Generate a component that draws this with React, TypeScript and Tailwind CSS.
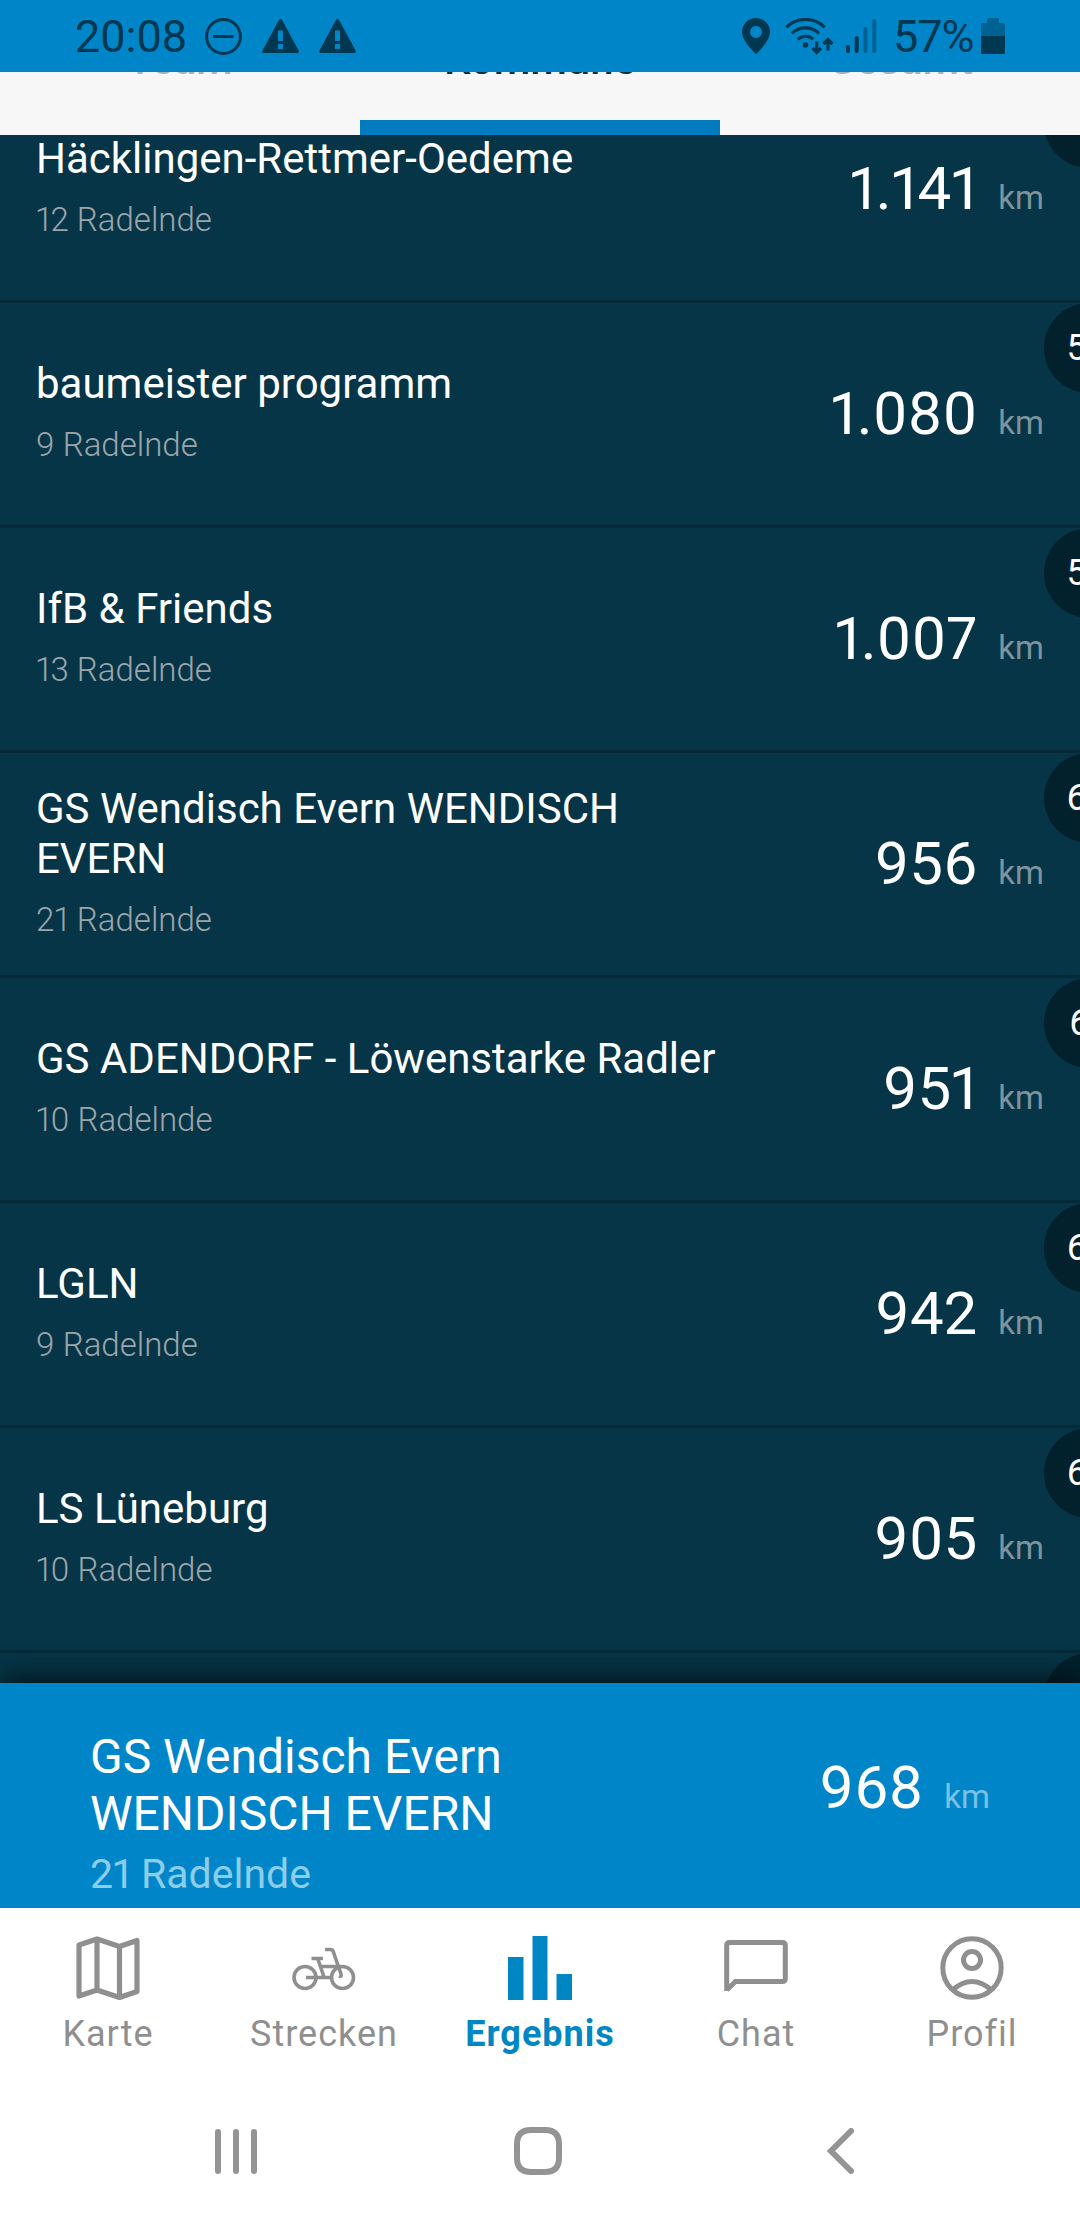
import React from 'react';

interface Team {
  rank: string;
  name: string;
  members: number;
  distance: string;
}

const teams: Team[] = [
  { rank: '57', name: 'Häcklingen-Rettmer-Oedeme', members: 12, distance: '1.141' },
  { rank: '58', name: 'baumeister programm', members: 9, distance: '1.080' },
  { rank: '59', name: 'IfB & Friends', members: 13, distance: '1.007' },
  { rank: '60', name: 'GS Wendisch Evern WENDISCH EVERN', members: 21, distance: '956' },
  { rank: '61', name: 'GS ADENDORF - Löwenstarke Radler', members: 10, distance: '951' },
  { rank: '62', name: 'LGLN', members: 9, distance: '942' },
  { rank: '63', name: 'LS Lüneburg', members: 10, distance: '905' },
];

const StatusBar: React.FC = () => (
  <header className="relative z-10 flex h-[72px] shrink-0 items-center justify-between bg-[#0086c8] pl-[75px] pr-[75px] text-[#003751]">
    <div className="flex items-center">
      <span className="w-[130px] pt-0.5 text-[45px] leading-[72px]">20:08</span>
      <svg width="37" height="37" viewBox="0 0 37 37" fill="none" stroke="currentColor" strokeWidth="3">
        <circle cx="18.5" cy="18.5" r="16.9" />
        <path d="M8 18.5h20.5" />
      </svg>
      <svg className="ml-5" width="37" height="34" viewBox="0 0 37 34" fill="currentColor">
        <path fillRule="evenodd" d="M17 .8Q18.500-.8 20 .8L36.800 32Q37 34 35.500 34H1.500Q0 34 .2 32ZM16 11.500v10.500h5V11.500ZM16 25v5h5v-5Z" />
      </svg>
      <svg className="ml-5" width="37" height="34" viewBox="0 0 37 34" fill="currentColor">
        <path fillRule="evenodd" d="M17 .8Q18.500-.8 20 .8L36.800 32Q37 34 35.500 34H1.500Q0 34 .2 32ZM16 11.500v10.500h5V11.500ZM16 25v5h5v-5Z" />
      </svg>
    </div>
    <div className="flex items-center">
      <svg width="28" height="36" viewBox="0 0 28 36" fill="currentColor">
        <path fillRule="evenodd" d="M14 0C6.300 0 0 6.200 0 14c0 9.800 14 22 14 22s14-12.200 14-22C28 6.200 21.700 0 14 0Zm0 8a6 6 0 1 1 0 12 6 6 0 0 1 0-12Z" />
      </svg>
      <svg className="ml-[15px]" width="49" height="37" viewBox="0 0 49 37" fill="none" stroke="currentColor" strokeWidth="3.200">
        <path d="M1.300 9.300a27.500 27.500 0 0 1 38.400 0M7 15.300a19.400 19.400 0 0 1 27 0M12.700 21.300a11.500 11.500 0 0 1 15.600 0" />
        <circle cx="20.500" cy="27" r="2.800" fill="currentColor" stroke="none" />
        <path d="M31.700 23.500v10M27.500 30l4.200 4.500L36 30M43 32.500V22M38.500 26l4.500-4.500 4.500 4.500" />
      </svg>
      <svg className="ml-3" width="31" height="34" viewBox="0 0 31 34" fill="currentColor">
        <rect x="0" y="26" width="4" height="8" rx="2" />
        <rect x="8.700" y="17" width="4" height="17" rx="2" />
        <rect x="17.500" y="8" width="4" height="26" rx="2" opacity=".45" />
        <rect x="26.300" y="0" width="4" height="34" rx="2" opacity=".45" />
      </svg>
      <span className="ml-4 w-[88px] pt-0.5 text-[45px] leading-[72px] tracking-[-1px]">57%</span>
      <svg width="24" height="36" viewBox="0 0 24 36" fill="currentColor">
        <path d="M6 5V1.500Q6 0 7.500 0h9Q18 0 18 1.500V5h4.500Q24 5 24 6.500V18H0V6.500Q0 5 1.500 5Z" opacity=".45" />
        <path d="M0 18h24v16.500q0 1.500-1.500 1.500h-21Q0 36 0 34.500Z" />
      </svg>
    </div>
  </header>
);

const Tabs: React.FC = () => (
  <div className="grid h-[63px] shrink-0 grid-cols-3 bg-[#f7f7f7] text-center text-[42px] font-medium text-[#a9b3bd]">
    <div className="-mt-9 leading-[48px]">Team</div>
    <div className="flex flex-col border-b-[15px] border-[#007bc0] text-[#063346]">
      <span className="-mt-9 leading-[48px]">Kommune</span>
    </div>
    <div className="-mt-9 leading-[48px]">Gesamt</div>
  </div>
);

const TeamRow: React.FC<{ team: Team }> = ({ team }) => (
  <li className="relative flex h-[225px] shrink-0 items-center justify-between border-b-[3px] border-[#042937] px-9">
    <div className="w-[690px] pb-0.5">
      <div className="text-[42px] leading-[50px] text-white">{team.name}</div>
      <div className="mt-[13px] text-[33px] font-light leading-[46px] text-[#9ca5aa]">{team.members} Radelnde</div>
    </div>
    <div className="flex items-baseline">
      <span className="text-[60px] leading-[70px] text-white">{team.distance}</span>
      <span className="ml-[21px] text-[33px] text-[#7d939d]">km</span>
    </div>
    <div className="absolute left-[1044px] top-0 flex size-[90px] items-center justify-center rounded-full bg-[#02212d] pr-1 text-[36px] text-white">
      {team.rank}
    </div>
  </li>
);

const navItems = [
  {
    label: 'Karte',
    icon: (
      <path
        d="M3 9 21 3 43.500 10.500 61 4.500V55.500L43.500 61.500 21 54 3 60ZM21 3V54M43.500 10.500V61.500"
        fill="none"
        stroke="currentColor"
        strokeWidth="5.200"
        strokeLinejoin="round"
      />
    ),
  },
  {
    label: 'Strecken',
    icon: (
      <g fill="none" stroke="currentColor" strokeWidth="3.600">
        <circle cx="13" cy="41.500" r="11" />
        <circle cx="50.500" cy="41.500" r="11" />
        <path d="M14 41.500H40M28 30.500H49M19.500 22.500H31M26 23.500 32 41M33 13.500H38.500Q40.500 13.500 41.200 15.500L49 38Q50 41 47 40" />
      </g>
    ),
  },
  {
    label: 'Ergebnis',
    active: true,
    icon: <path d="M0 21H15.500V64H0ZM24.500 0H39.500V64H24.500ZM48.500 38H64V64H48.500Z" fill="currentColor" />,
  },
  {
    label: 'Chat',
    icon: (
      <path
        d="M2.700 55V9.500Q2.700 6.500 5.700 6.500H58.300Q61.300 6.500 61.300 9.500V42.500Q61.300 45.500 58.300 45.500H11.500L2.700 54"
        fill="none"
        stroke="currentColor"
        strokeWidth="5"
      />
    ),
  },
  {
    label: 'Profil',
    icon: (
      <g fill="none" stroke="currentColor" strokeWidth="5">
        <circle cx="32" cy="32" r="29.200" />
        <circle cx="32" cy="24" r="8.500" />
        <path d="M12.500 54Q32 37 51.500 54" />
      </g>
    ),
  },
];

const BottomNav: React.FC = () => (
  <nav className="grid h-[192px] shrink-0 grid-cols-5 pt-7">
    {navItems.map((item) => (
      <div
        key={item.label}
        className={`flex flex-col items-center ${item.active ? 'font-bold text-[#0086c3]' : 'text-[#8f8f8f]'}`}
      >
        <svg width="64" height="64" viewBox="0 0 64 64">
          {item.icon}
        </svg>
        <span className="mt-[13px] text-[36px] leading-[43px] tracking-[1px]">{item.label}</span>
      </div>
    ))}
  </nav>
);

const SystemNav: React.FC = () => (
  <div className="flex h-[102px] shrink-0 items-center pl-[215px] text-[#949494]">
    <svg width="42" height="45" viewBox="0 0 42 45" fill="currentColor">
      <rect x="0" width="6" height="45" rx="3" />
      <rect x="18" width="6" height="45" rx="3" />
      <rect x="36" width="6" height="45" rx="3" />
    </svg>
    <svg className="ml-[257px]" width="48" height="48" viewBox="0 0 48 48" fill="none" stroke="currentColor" strokeWidth="6">
      <path d="M17 3H31Q45 3 45 17V31Q45 45 31 45H17Q3 45 3 31V17Q3 3 17 3Z" />
    </svg>
    <svg className="ml-[265px]" width="27" height="46" viewBox="0 0 27 46" fill="none" stroke="currentColor" strokeWidth="6" strokeLinecap="round">
      <path d="M24 3 4 23 24 43" />
    </svg>
  </div>
);

const App: React.FC = () => {
  return (
    <div className="flex h-[2220px] w-[1080px] flex-col overflow-hidden bg-white font-[Roboto,sans-serif]">
      <StatusBar />
      <Tabs />
      <main className="flex h-[1548px] shrink-0 flex-col overflow-hidden bg-[#063547] proportional-nums">
        <ul className="-mt-[57px] flex flex-col">
          {teams.map((team) => (
            <TeamRow key={team.rank} team={team} />
          ))}
          {/* next entry, only its badge peeks out above the summary */}
          <li className="relative h-[225px] shrink-0">
            <div className="absolute left-[1044px] top-0 size-[90px] rounded-full bg-[#02212d]" />
          </li>
        </ul>
      </main>
      <section className="relative flex h-[225px] shrink-0 justify-between bg-[#0086c8] px-[90px] proportional-nums shadow-[0_0_30px_rgba(0,0,0,0.9)] [clip-path:inset(-40px_0_0_0)]">
        <div className="w-[520px] pt-[45px]">
          <div className="text-[48px] leading-[57px] text-white">GS Wendisch Evern WENDISCH EVERN</div>
          <div className="mt-2 text-[41px] leading-[48px] text-[#8ccdea]">21 Radelnde</div>
        </div>
        <div className="flex items-baseline pt-[70px]">
          <span className="text-[60px] leading-[70px] text-white">968</span>
          <span className="ml-[21px] text-[33px] text-[#79c1e5]">km</span>
        </div>
      </section>
      <BottomNav />
      <SystemNav />
    </div>
  );
};

export default App;
